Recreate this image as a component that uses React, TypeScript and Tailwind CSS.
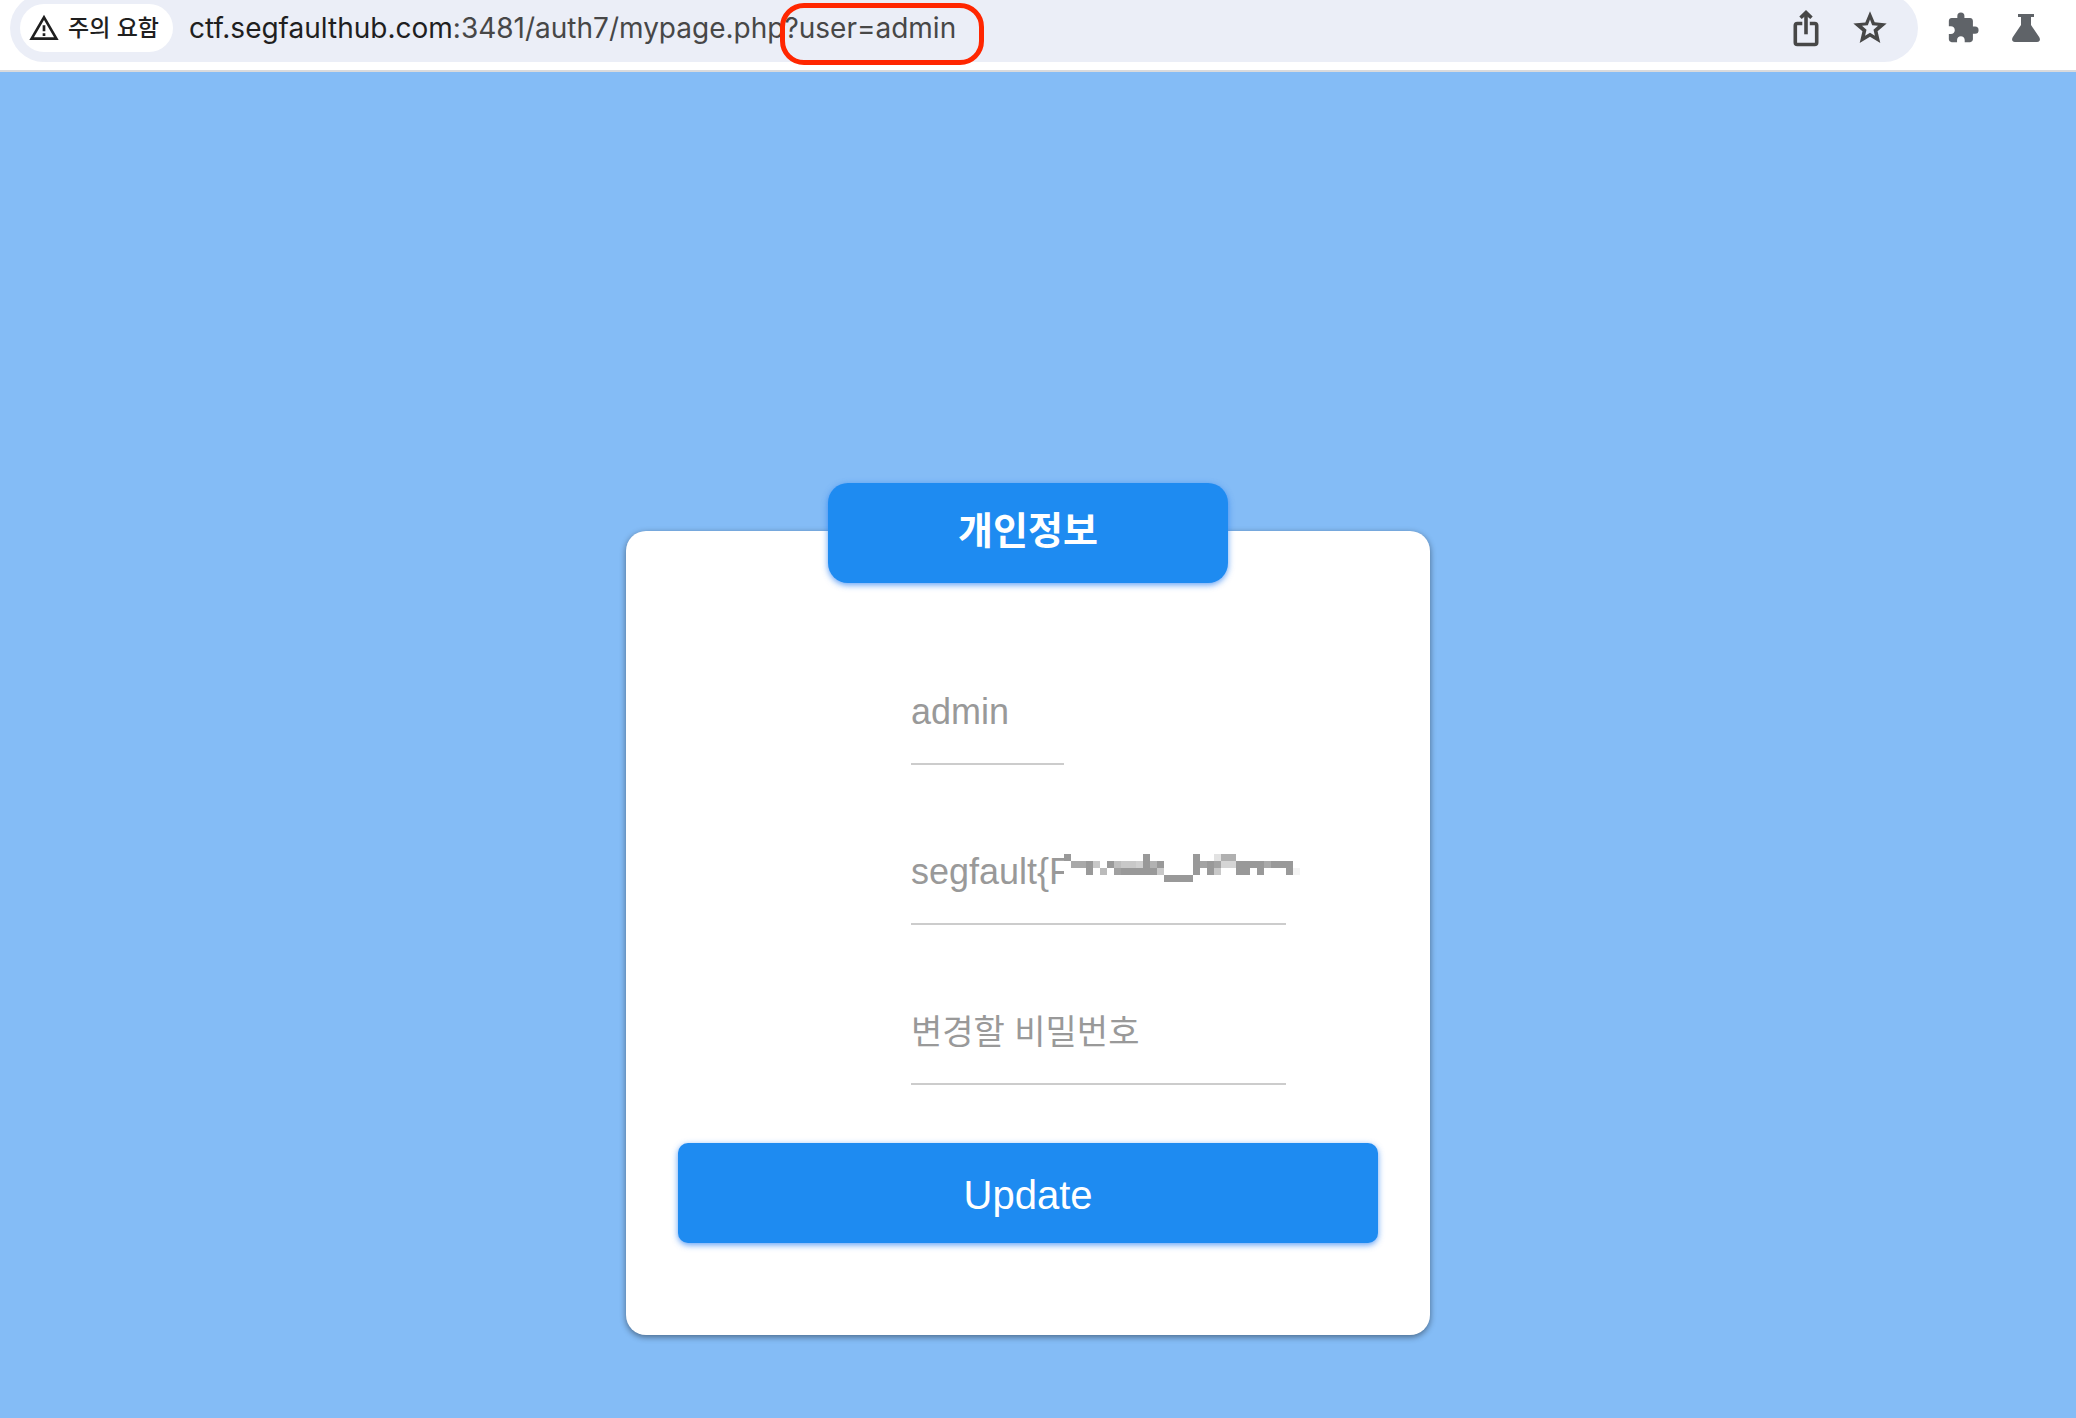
import React from "react";
import { MdExtension } from "react-icons/md";

type Cell = [x: number, y: number, w: number, h: number, fill: string];

const MOSAIC: Cell[] = [
  [0, 0, 7, 7, "#999"],
  [79, 0, 7, 21, "#999"],
  [129, 0, 7, 21, "#999"],
  [150, 0, 7, 7, "#e2e2e2"],
  [157, 0, 15, 7, "#b0b0b0"],
  [7, 7, 15, 7, "#a9a9a9"],
  [22, 7, 7, 14, "#999"],
  [29, 7, 7, 7, "#c8c8c8"],
  [43, 7, 7, 7, "#999"],
  [50, 7, 7, 7, "#bebebe"],
  [57, 7, 15, 7, "#c8c8c8"],
  [72, 7, 7, 7, "#cfcfcf"],
  [86, 7, 7, 7, "#b2b2b2"],
  [93, 7, 7, 7, "#999"],
  [136, 7, 7, 7, "#a3a3a3"],
  [143, 7, 7, 14, "#999"],
  [150, 7, 7, 7, "#a3a3a3"],
  [157, 7, 15, 7, "#d5d5d5"],
  [172, 7, 28, 7, "#999"],
  [200, 7, 7, 7, "#aaa"],
  [207, 7, 22, 7, "#999"],
  [36, 14, 7, 7, "#bbb"],
  [50, 14, 7, 7, "#a0a0a0"],
  [57, 14, 22, 7, "#999"],
  [86, 14, 7, 7, "#999"],
  [93, 14, 7, 7, "#c8c8c8"],
  [150, 14, 7, 7, "#c8c8c8"],
  [172, 14, 14, 7, "#999"],
  [193, 14, 7, 7, "#999"],
  [222, 14, 7, 7, "#999"],
  [229, 14, 7, 7, "#f4f4f4"],
  [100, 21, 29, 7, "#999"],
];

function WarningIcon() {
  return (
    <svg viewBox="0 0 24 24" className="size-8 shrink-0" fill="currentColor" aria-hidden="true">
      <path d="M12 5.99 19.53 19H4.47L12 5.99M12 2 1 21h22L12 2zm1 14h-2v2h2v-2zm0-6h-2v4.500h2V10z" />
    </svg>
  );
}

function ShareIcon() {
  return (
    <svg viewBox="0 0 40 40" className="size-10" fill="none" stroke="currentColor" strokeWidth="3.600" aria-hidden="true">
      <path d="M16.300 15.500H11.300Q9.300 15.500 9.300 17.500V34.500Q9.300 36.500 11.300 36.500H28.700Q30.700 36.500 30.700 34.500V17.500Q30.700 15.500 28.700 15.500H23.800" />
      <path d="M20 26.300V5" />
      <path d="M20 2 26.700 8.600 24.300 11 20 7.500 15.700 11 13.300 8.600z" fill="currentColor" stroke="none" />
    </svg>
  );
}

function StarIcon() {
  return (
    <svg viewBox="0 0 24 24" className="size-10" fill="currentColor" fillRule="evenodd" aria-hidden="true">
      <path d="m22 9.24-7.19-.62L12 2 9.19 8.63 2 9.24l5.46 4.73L5.82 21 12 17.27 18.18 21l-1.63-7.03L22 9.24zM12 6.9l1.300 3.500 3.500.3-2.700 2.400.85 3.500L12 14.800 9.050 16.600l.85-3.500-2.700-2.400 3.500-.3z" />
    </svg>
  );
}

function FlaskIcon() {
  return (
    <svg viewBox="0 0 28 28" className="size-7" fill="currentColor" aria-hidden="true">
      <path d="M6 0h16v3h-3v8l8.300 12.200Q28.500 25.500 27.400 27 26.600 28 25 28H3Q1.400 28 .6 27-.5 25.500.7 23.200L9 11V3H6z" />
    </svg>
  );
}

function Toolbar() {
  return (
    <header className="flex h-[72px] items-start overflow-hidden border-b-2 border-[#d9dadc] bg-white pr-9 pl-2.5">
      <div className="-mt-1.5 flex h-[68px] flex-1 items-center rounded-full bg-[#ebeef7] pr-7 pl-2.5">
        <button
          type="button"
          className="flex h-12 items-center gap-2 rounded-full bg-white pr-3.5 pl-2 text-[23px] leading-8 font-medium text-[#1f1f1f]"
        >
          <WarningIcon />
          <span className="whitespace-nowrap">주의 요함</span>
        </button>
        <p className="ml-4 font-['Inter','Noto_Sans_CJK_KR',sans-serif] text-[28px] leading-10 whitespace-nowrap text-[#474747]">
          <span className="text-[#1f1f1f]">ctf.segfaulthub.com</span>:3481/auth7/mypage.php
          <span className="relative">
            ?user=admin
            <span className="absolute -top-2 -right-7 -bottom-5 -left-1 rounded-3xl border-5 border-[#ff2600]" />
          </span>
        </p>
        <div className="ml-auto flex items-center gap-6 text-[#474747]">
          <button type="button" aria-label="공유">
            <ShareIcon />
          </button>
          <button type="button" aria-label="북마크">
            <StarIcon />
          </button>
        </div>
      </div>
      <div className="flex h-14 items-center gap-8 pl-7 text-[#5f6368]">
        <button type="button" aria-label="확장 프로그램">
          <MdExtension className="size-[34px]" />
        </button>
        <button type="button" aria-label="실험실">
          <FlaskIcon />
        </button>
      </div>
    </header>
  );
}

const FIELD =
  "block h-[102px] border-b-2 border-[#ccc] bg-transparent pb-0.5 text-[36px] text-[#999] outline-none placeholder:text-[#999] placeholder:opacity-100";

function ProfileCard() {
  return (
    <form
      className="w-[804px] rounded-[20px] bg-white px-[52px] pb-[92px] shadow-[0_2px_6px_rgba(0,0,0,0.45)]"
      onSubmit={(e) => e.preventDefault()}
    >
      <h1 className="mx-auto -mt-12 flex h-[100px] w-[400px] items-center justify-center rounded-[20px] bg-[#1e8bf1] pb-1 text-[38px] font-bold text-white shadow-[0_2px_6px_rgba(30,120,241,0.7)]">
        개인정보
      </h1>
      <div className="mt-20 ml-[233px] flex flex-col items-start gap-[58px]">
        <input aria-label="아이디" className={`${FIELD} w-[153px]`} defaultValue="admin" />
        <div className="relative">
          <input aria-label="정보" className={`${FIELD} w-[375px]`} defaultValue="segfault{F" />
          <svg
            viewBox="0 0 240 42"
            className="absolute top-[31px] left-[153px] h-[42px] w-60"
            shapeRendering="crispEdges"
            aria-hidden="true"
          >
            <rect width="240" height="42" fill="#fff" />
            {MOSAIC.map(([x, y, w, h, fill]) => (
              <rect key={`${x}-${y}`} x={x} y={y} width={w} height={h} fill={fill} />
            ))}
          </svg>
        </div>
        <input
          aria-label="변경할 비밀번호"
          type="password"
          className={`${FIELD} w-[375px] placeholder:text-[34px]`}
          placeholder="변경할 비밀번호"
        />
      </div>
      <button
        type="submit"
        className="mt-[58px] h-[100px] w-full rounded-[10px] bg-[#1e8bf1] pt-1 text-[40px] text-white shadow-[0_2px_6px_rgba(30,120,241,0.7)]"
      >
        Update
      </button>
    </form>
  );
}

export default function App() {
  return (
    <div className="flex min-h-screen flex-col bg-[#84bcf6] font-['Liberation_Sans','Noto_Sans_CJK_KR',sans-serif]">
      <Toolbar />
      <main className="flex flex-1 flex-col items-center pt-[459px] pr-5 pb-20">
        <ProfileCard />
      </main>
    </div>
  );
}
